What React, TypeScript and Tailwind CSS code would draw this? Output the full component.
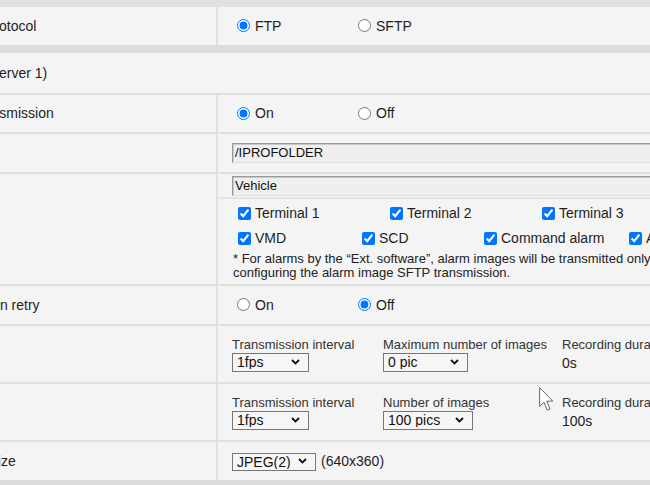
import type { ReactNode } from "react";

/* --------------------- Small form parts --------------------- */
const Radio = ({ name, label, checked = false }: { name: string; label: string; checked?: boolean }) => (
  <label className="flex items-center w-[121px] shrink-0">
    <input
      type="radio"
      name={name}
      defaultChecked={checked}
      className="ml-[5px] mr-[5px] w-[13px] h-[13px] mt-[-1px]"
    />
    <span>{label}</span>
  </label>
);

const Check = ({ label, className }: { label: string; className: string }) => (
  <label className={`flex items-center shrink-0 ${className}`}>
    <input type="checkbox" defaultChecked className="ml-[6px] mr-[4px] w-[13px] h-[13px]" />
    <span className="whitespace-nowrap">{label}</span>
  </label>
);

const Chevron = () => (
  <svg
    width="9"
    height="6"
    viewBox="0 0 9 6"
    className="absolute right-[9px] top-1/2 -translate-y-1/2 pointer-events-none"
  >
    <path d="M1 1 L4.5 4.5 L8 1" fill="none" stroke="#111" strokeWidth="1.8" />
  </svg>
);

const Select = ({ value, className }: { value: string; className: string }) => (
  <div className={`relative shrink-0 ${className}`}>
    <select
      defaultValue={value}
      className="appearance-none w-full h-full border border-[#767676] bg-[#f6f6f6] pl-[4px] text-[14px] leading-none text-[#111]"
    >
      <option>{value}</option>
    </select>
    <Chevron />
  </div>
);

const TextBox = ({ value }: { value: string }) => (
  <div className="w-[480px] h-[20px] border border-[#9a9a9a] border-r-[#dedede] border-b-[#dedede] bg-[#efefef] pl-[2px] text-[13px] leading-[18px] text-[#111] shadow-[inset_1px_1px_0_#c8c8c8]">
    {value}
  </div>
);

/* --------------------- Table rows --------------------- */
const Row = ({ label, labelClass = "", className, children }: { label?: string; labelClass?: string; className: string; children: ReactNode }) => (
  <div className={`flex gap-[2px] ${className}`}>
    <div className="w-[216px] shrink-0 bg-[#f4f4f4] flex items-center overflow-hidden">
      {label && <span className={`whitespace-nowrap ${labelClass}`}>{label}</span>}
    </div>
    <div className="flex-1 bg-[#f4f4f4] pl-[14px]">{children}</div>
  </div>
);

const Field = ({ label, children, className }: { label: string; children: ReactNode; className: string }) => (
  <div className={`flex flex-col shrink-0 ${className}`}>
    <span className="text-[13px] leading-[15px] text-[#333] whitespace-nowrap">{label}</span>
    {children}
  </div>
);

/* --------------------- Page --------------------- */
export default function App() {
  return (
    <div className="relative w-[650px] h-[485px] overflow-hidden bg-[#dcdcdc] font-['Liberation_Sans',Arial,sans-serif] text-[14px] text-[#1e1e1e]">
      <div className="w-[860px] flex flex-col bg-[#e0e0e0] pt-[7px]">
        {/* Protocol */}
        <Row label="Protocol" labelClass="ml-[-15px]" className="h-[38px]">
          <div className="h-full flex items-center">
            <Radio name="proto" label="FTP" checked />
            <Radio name="proto" label="SFTP" />
          </div>
        </Row>

        <div className="h-[8px] bg-[#dcdcdc]" />

        {/* Section header */}
        <div className="h-[40px] bg-[#f4f4f4] flex items-center overflow-hidden">
          <span className="ml-[-15px] whitespace-nowrap">(Server 1)</span>
        </div>

        <div className="flex flex-col gap-[2px] pt-[2px]">
          <Row label="Transmission" labelClass="ml-[-29px]" className="h-[37px]">
            <div className="h-full flex items-center">
              <Radio name="trans" label="On" checked />
              <Radio name="trans" label="Off" />
            </div>
          </Row>

          <Row className="h-[38px]">
            <div className="h-full flex items-center">
              <TextBox value="/IPROFOLDER" />
            </div>
          </Row>

          <Row className="h-[110px]">
            <div className="flex flex-col ml-[-14px]">
              <div className="pl-[14px] pt-[2px] pb-[1px]">
                <TextBox value="Vehicle" />
              </div>
              <div className="h-[2px] bg-[#e4e4e4]" />
              <div className="pl-[14px] pt-[5px] flex flex-col">
                <div className="flex h-[18px] items-center">
                  <Check label="Terminal 1" className="w-[152px]" />
                  <Check label="Terminal 2" className="w-[152px]" />
                  <Check label="Terminal 3" className="w-[152px]" />
                </div>
                <div className="flex h-[18px] items-center mt-[7px]">
                  <Check label="VMD" className="w-[124px]" />
                  <Check label="SCD" className="w-[122px]" />
                  <Check label="Command alarm" className="w-[145px]" />
                  <Check label="Auto track" className="w-[120px]" />
                </div>
                <p className="mt-[5px] pl-[1px] text-[13px] leading-[14px] text-[#222]">
                  * For alarms by the “Ext. software”, alarm images will be transmitted only when
                  <br />
                  configuring the alarm image SFTP transmission.
                </p>
              </div>
            </div>
          </Row>

          <Row label="Transmission retry" labelClass="ml-[-75px]" className="h-[38px]">
            <div className="h-full flex items-center">
              <Radio name="retry" label="On" />
              <Radio name="retry" label="Off" checked />
            </div>
          </Row>

          <Row className="h-[56px]">
            <div className="flex pt-[11px]">
              <Field label="Transmission interval" className="w-[151px]">
                <Select value="1fps" className="w-[77px] h-[19px]" />
              </Field>
              <Field label="Maximum number of images" className="w-[179px]">
                <Select value="0 pic" className="w-[85px] h-[19px]" />
              </Field>
              <Field label="Recording duration" className="w-[160px]">
                <span className="mt-[2px] leading-[18px]">0s</span>
              </Field>
            </div>
          </Row>

          <Row className="h-[56px]">
            <div className="flex pt-[11px]">
              <Field label="Transmission interval" className="w-[151px]">
                <Select value="1fps" className="w-[77px] h-[19px]" />
              </Field>
              <Field label="Number of images" className="w-[179px]">
                <Select value="100 pics" className="w-[90px] h-[19px]" />
              </Field>
              <Field label="Recording duration" className="w-[160px]">
                <span className="mt-[2px] leading-[18px]">100s</span>
              </Field>
            </div>
          </Row>

          <Row label="Image size" labelClass="ml-[-52px]" className="h-[38px]">
            <div className="h-full flex items-center gap-[5px]">
              <Select value="JPEG(2)" className="w-[84px] h-[18px]" />
              <span>(640x360)</span>
            </div>
          </Row>
        </div>
      </div>

      {/* mouse pointer */}
      <svg width="15" height="25" viewBox="0 0 12 20" className="absolute left-[539px] top-[387px] pointer-events-none">
        <path d="M0.5 0.5 L0.5 15.5 L4 12.2 L6.6 18.5 L8.8 17.6 L6.2 11.3 L11 11.3 Z" fill="#fff" stroke="#666" strokeWidth="0.8" />
      </svg>
    </div>
  );
}
